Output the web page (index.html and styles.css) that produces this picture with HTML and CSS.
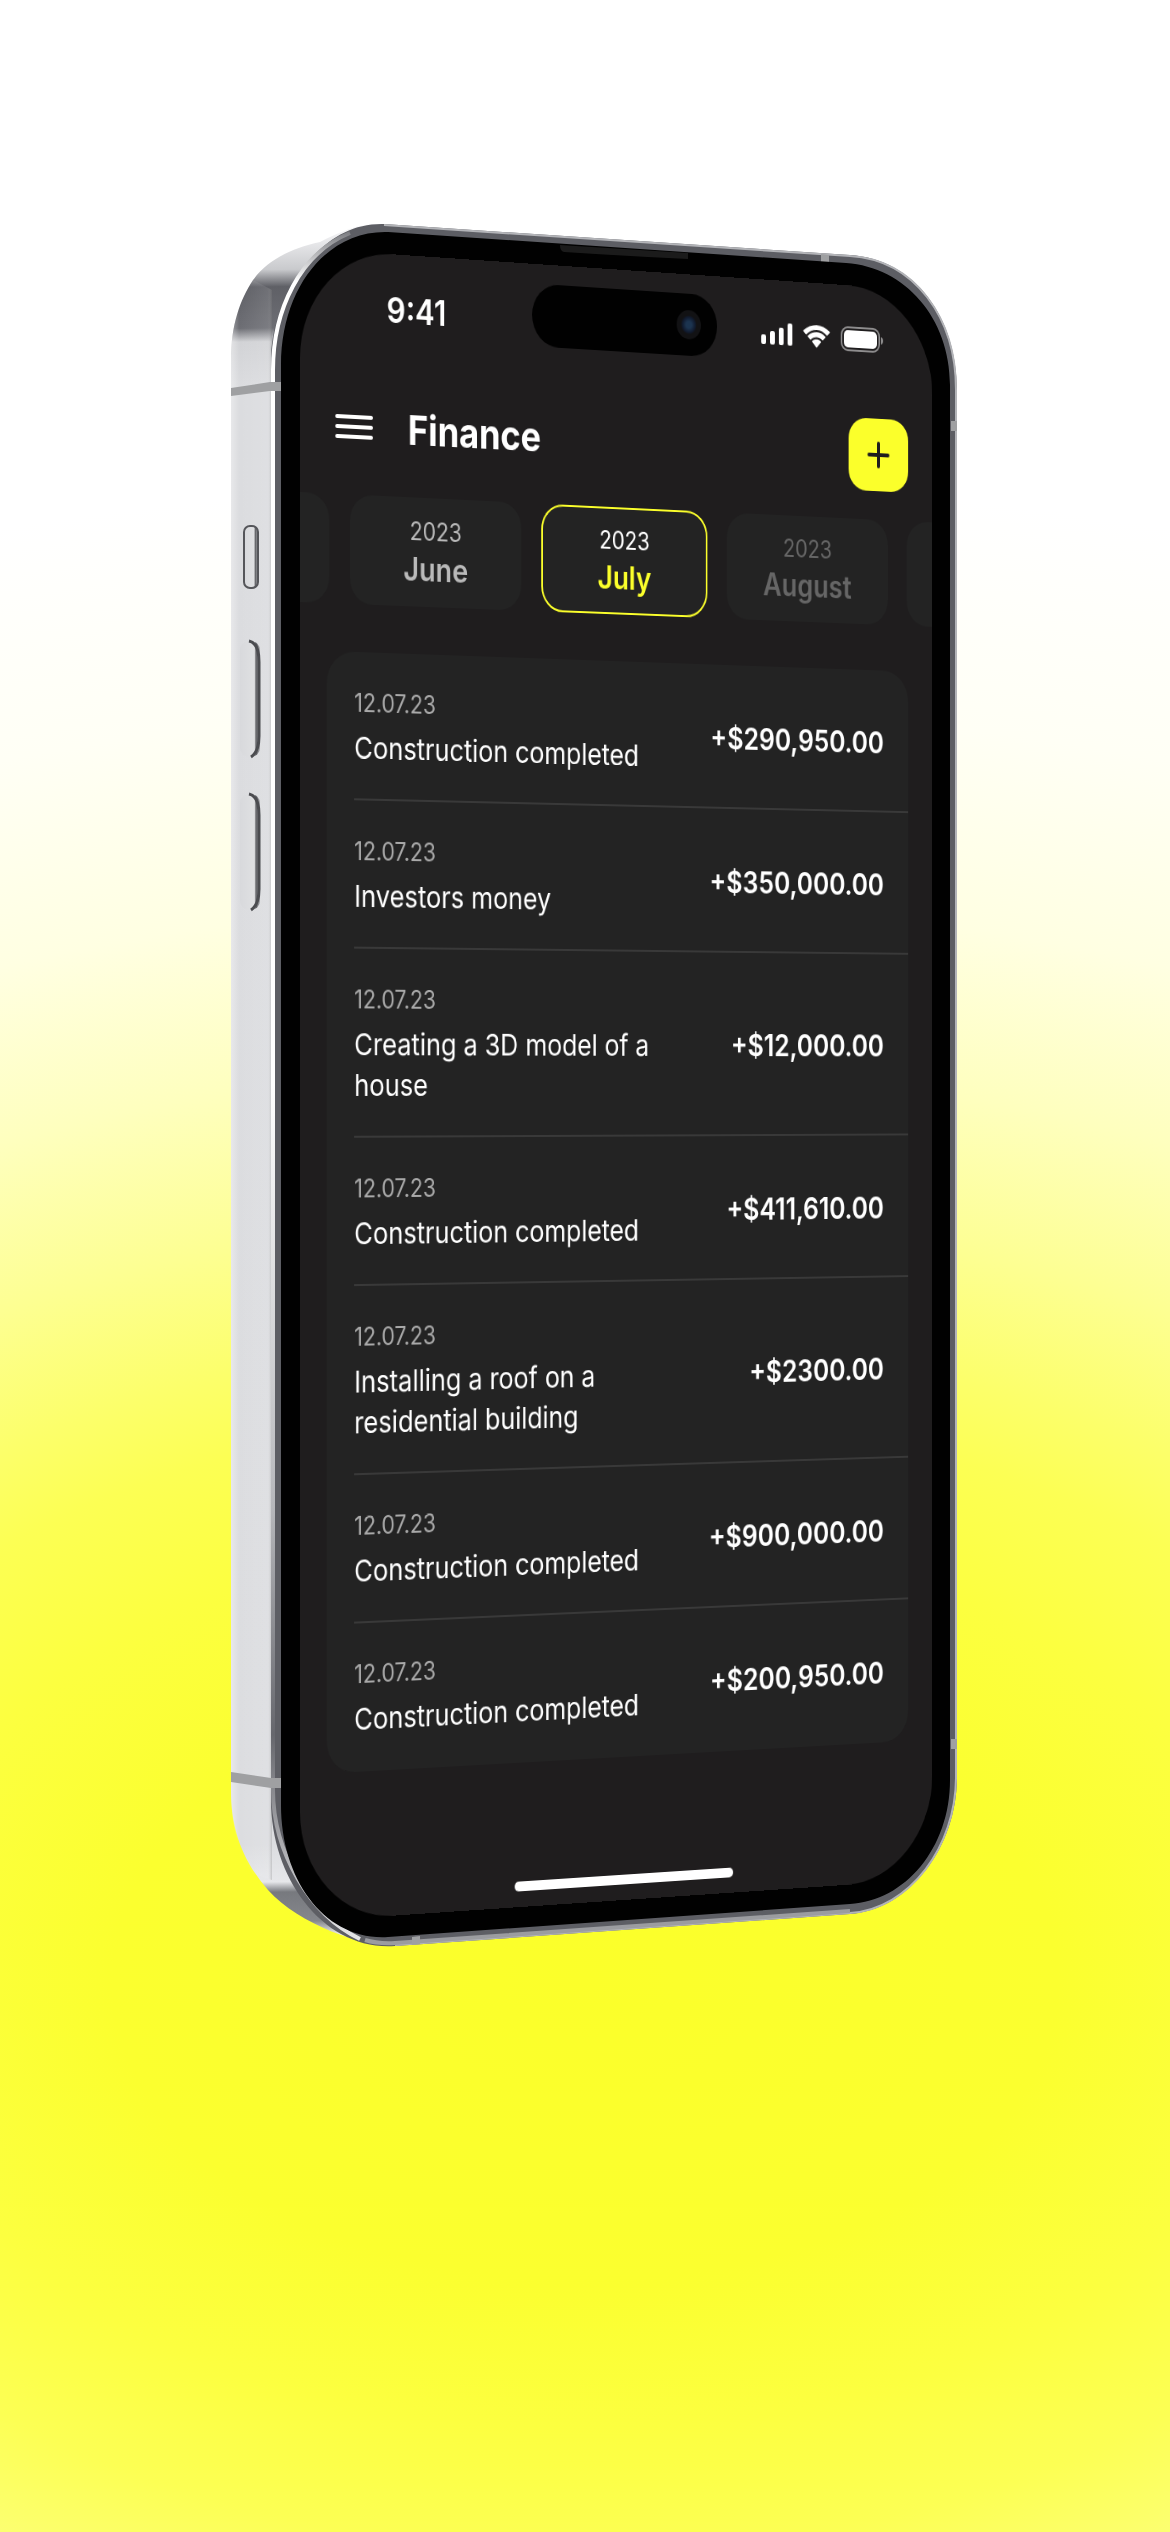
FILE: index.html
```html
<!DOCTYPE html>
<html lang="en">
<head>
<meta charset="utf-8">
<meta name="viewport" content="width=device-width, initial-scale=1">
<title>Finance</title>
<link rel="stylesheet" href="styles.css">
</head>
<body>
<main class="stage">
  <div class="phone">
    <svg class="phone-body" viewBox="213 222 744 1728" preserveAspectRatio="none" aria-hidden="true">
      <defs>
        <linearGradient id="flank" gradientUnits="userSpaceOnUse" x1="0" y1="235" x2="20" y2="1950">
          <stop offset="0" stop-color="#f4f4f6"/>
          <stop offset=".022" stop-color="#c9cacd"/>
          <stop offset=".032" stop-color="#5f6066"/>
          <stop offset=".056" stop-color="#6d6e74"/>
          <stop offset=".064" stop-color="#d2d3d6"/>
          <stop offset=".09" stop-color="#dbdcdf"/>
          <stop offset=".94" stop-color="#dcdde0"/>
          <stop offset=".962" stop-color="#e6e7ea"/>
          <stop offset=".968" stop-color="#77797e"/>
          <stop offset=".985" stop-color="#85878c"/>
          <stop offset=".994" stop-color="#f8f8f8"/>
        </linearGradient>
        <linearGradient id="shade" x1="0" x2="1" y1="0" y2="0">
          <stop offset="0" stop-color="#fff" stop-opacity=".35"/>
          <stop offset=".2" stop-color="#fff" stop-opacity="0"/>
          <stop offset=".9" stop-color="#fff" stop-opacity=".1"/>
          <stop offset="1" stop-color="#777" stop-opacity=".3"/>
        </linearGradient>
        <linearGradient id="shine" gradientUnits="userSpaceOnUse" x1="0" y1="230" x2="0" y2="1940">
          <stop offset="0" stop-color="#77787d"/>
          <stop offset=".03" stop-color="#fff"/>
          <stop offset=".5" stop-color="#fff"/>
          <stop offset=".75" stop-color="#b5b6ba"/>
          <stop offset=".88" stop-color="#66676d"/>
          <stop offset="1" stop-color="#e6e6e8"/>
        </linearGradient>
        <linearGradient id="key" x1="0" x2="1" y1="0" y2="0">
          <stop offset="0" stop-color="#d8d9dc"/>
          <stop offset=".72" stop-color="#dfe0e2"/>
          <stop offset=".8" stop-color="#606165"/>
          <stop offset="1" stop-color="#a5a6aa"/>
        </linearGradient>
      </defs>
      <path id="side" fill="url(#flank)" d="M231 360C231 325 240 300 253 280C266 262 288 249 320 242C340 232 356 224 380 224L420 300V1880L400 1946C360 1946 300 1925 268 1890C240 1858 231 1825 231 1790Z"/>
      <path fill="url(#shade)" d="M231 360C231 325 240 300 253 280L272 290V1880L253 1874C238 1850 231 1825 231 1790Z"/>
      <path fill="#9fa0a2" d="M231 388L270 382H281V391H270L231 396ZM231 1772L271 1778H281V1788H271L231 1782Z"/>
      <path fill="#5d5e64" d="M271 360C271 330 280 306 297 277C320 243 348 223 384 224L850 255C915 259 957 318 957 390V1777C957 1846 910 1910 850 1914L395 1946C325 1951 271 1880 271 1800Z"/>
      <path fill="none" stroke="#b3b4b8" stroke-width="2" d="M384 225L850 256C915 260 956 318 956 390V1777C956 1846 910 1909 850 1913L395 1945"/>
      <path fill="none" stroke="#9b9ca0" stroke-width="4" d="M850 1911L395 1943Q378 1944 365 1940"/>
      <path fill="none" stroke="url(#shine)" stroke-width="4" d="M350 233C300 253 273 310 273 370V1790C273 1852 310 1915 360 1939"/>
      <path fill="#9fa0a2" d="M270 382H281V391H270ZM271 1778H281V1788H271ZM821 254L829 255V262L821 262ZM951 421H957V431H951ZM951 1739H957V1749H951ZM412 1937L420 1936V1944L412 1945Z"/>
      <path fill="#010101" d="M281 365C281 288 327 230 388 232L846 263C905 267 950 318 950 385V1780C950 1848 905 1901 850 1904L388 1937C325 1941 281 1880 281 1805Z"/>
      <path fill="#1b1b1b" d="M560 245L688 253V259Q624 256 564 252Q560 251 560 245Z"/>
      <g>
        <rect x="244" y="526" width="14" height="62" rx="6" fill="url(#key)" stroke="#55565a" stroke-width="2"/>
        <rect x="240" y="641" width="20" height="116" rx="9" fill="url(#key)"/>
        <path fill="none" stroke="#4b4c50" stroke-width="3" d="M249 641Q259 643 259 662V736Q259 752 251 757"/>
        <rect x="240" y="794" width="20" height="116" rx="9" fill="url(#key)"/>
        <path fill="none" stroke="#4b4c50" stroke-width="3" d="M249 794Q259 796 259 815V889Q259 905 251 910"/>
      </g>
    </svg>

    <section class="screen" aria-label="Finance app">
      <div class="island"><span class="camera"></span></div>

      <div class="status">
        <time class="clock">9:41</time>
        <svg class="signal" viewBox="0 0 39 24" aria-hidden="true">
          <rect x="0" y="13" width="6" height="10" rx="2"/>
          <rect x="11" y="9" width="6" height="14" rx="2"/>
          <rect x="22" y="5" width="6" height="18" rx="2"/>
          <rect x="33" y="0" width="6" height="23" rx="2"/>
        </svg>
        <svg class="wifi" viewBox="0 0 35 24" aria-hidden="true">
          <path d="M17.500 5C22.400 5 26.900 6.900 30.200 10.100Q30.700 10.500 31.200 10.100L34 7.200Q34.500 6.600 34 6.100C24.800-2 10.200-2 1 6.100Q.5 6.600 1 7.200L3.800 10.100Q4.300 10.500 4.800 10.100C8.100 6.900 12.600 5 17.500 5Z"/>
          <path d="M17.500 12.500C20.200 12.500 22.700 13.500 24.600 15.300Q25.200 15.800 25.700 15.300L28.500 12.500Q29.100 11.900 28.500 11.400C22.300 5.900 12.700 5.900 6.500 11.400Q5.900 11.900 6.500 12.500L9.300 15.300Q9.800 15.800 10.400 15.300C12.300 13.500 14.800 12.500 17.500 12.500Z"/>
          <path d="M22.900 17.800Q23.500 17.200 22.900 16.700C19.800 14.100 15.200 14.100 12.100 16.700Q11.500 17.200 12.100 17.800L16.900 23Q17.500 23.600 18.100 23Z"/>
        </svg>
        <svg class="battery" viewBox="0 0 54 26" aria-hidden="true">
          <rect x="1" y="1" width="48" height="24" rx="8" fill="none" stroke="#8e8d8e" stroke-width="2"/>
          <rect x="4" y="4" width="42" height="18" rx="5"/>
          <path fill="#8e8d8e" d="M51 9Q54 10 54 13T51 17Z"/>
        </svg>
      </div>

      <header class="top">
        <button class="menu" type="button" aria-label="Menu">
          <svg viewBox="0 0 44 24" aria-hidden="true"><path d="M2 2H42M2 12H42M2 22H42"/></svg>
        </button>
        <h1>Finance</h1>
        <button class="add" type="button" aria-label="Add">
          <svg viewBox="0 0 28 28" aria-hidden="true"><path d="M14 2V26M2 14H26"/></svg>
        </button>
      </header>

      <nav class="months" aria-label="Months">
        <button class="month" type="button" aria-label="Earlier"></button>
        <button class="month past" type="button"><span>2023</span><strong>June</strong></button>
        <button class="month current" type="button" aria-current="true"><span>2023</span><strong>July</strong></button>
        <button class="month" type="button"><span>2023</span><strong>August</strong></button>
        <button class="month" type="button" aria-label="Later"></button>
      </nav>

      <ul class="entries">
        <li><div class="what"><time>12.07.23</time><p>Construction completed</p></div><b>+$290,950.00</b></li>
        <li><div class="what"><time>12.07.23</time><p>Investors money</p></div><b>+$350,000.00</b></li>
        <li><div class="what"><time>12.07.23</time><p>Creating a 3D model of a house</p></div><b>+$12,000.00</b></li>
        <li><div class="what"><time>12.07.23</time><p>Construction completed</p></div><b>+$411,610.00</b></li>
        <li><div class="what"><time>12.07.23</time><p>Installing a roof on a residential building</p></div><b>+$2300.00</b></li>
        <li><div class="what"><time>12.07.23</time><p>Construction completed</p></div><b>+$900,000.00</b></li>
        <li><div class="what"><time>12.07.23</time><p>Construction completed</p></div><b>+$200,950.00</b></li>
      </ul>

      <div class="home"></div>
    </section>
  </div>
</main>
</body>
</html>
```
FILE: styles.css
```css
* {
  box-sizing: border-box;
}

body {
  margin: 0;
  font-family: Inter, "Liberation Sans", sans-serif;
  color: #fff;
}

h1, p, ul {
  margin: 0;
  padding: 0;
}

button {
  border: 0;
  padding: 0;
  font: inherit;
  color: inherit;
  background: none;
}

.stage {
  min-height: 100vh;
  padding-top: 222px;
  overflow: hidden;
  background: radial-gradient(ellipse 202% 59.2% at 50% 78.2%,
    #fbff2a 0%, #fbff2f 20%, #fcff40 30%, #fcff54 38%, #fcff6a 43%,
    #fdff92 51%, #feffbe 61%, #ffffe2 72%, #fffff5 85%, #fff 100%);
}

/* The phone, turned away from the viewer on its right side */
.phone {
  position: relative;
  max-width: 744px;
  margin: 0 auto;
  padding: 26px 0 28px 87px;
}

.phone-body {
  position: absolute;
  inset: 0;
  width: 100%;
  height: 100%;
}

.screen {
  position: relative;
  width: 772px;
  overflow: hidden;
  border-radius: 110px;
  background: #1f1d1e;
  transform: perspective(7200px) rotateY(30.3deg);
  transform-origin: left center;
}

.island {
  position: absolute;
  top: 20px;
  left: 50%;
  display: flex;
  align-items: center;
  justify-content: flex-end;
  width: 226px;
  height: 64px;
  margin-left: -112px;
  padding-right: 20px;
  border-radius: 32px;
  background: #010101;
}

.camera {
  width: 30px;
  height: 30px;
  border-radius: 50%;
  background: radial-gradient(circle, #1c3450 0 16%, #10192c 38%, #121214 46% 100%);
}

.status {
  display: flex;
  align-items: center;
  gap: 13px;
  height: 112px;
  padding: 0 63px 0 101px;
  fill: #fff;
}

.clock {
  flex: 1;
  font-size: 35px;
  font-weight: 600;
}

.signal {
  width: 39px;
  height: 24px;
}

.wifi {
  width: 35px;
  height: 24px;
}

.battery {
  width: 54px;
  height: 26px;
}

.top {
  display: flex;
  align-items: center;
  padding: 26px 31px 30px 41px;
}

.top h1 {
  flex: 1;
  padding-left: 41px;
  font-size: 41px;
  line-height: 48px;
  font-weight: 700;
}

.menu,
.menu svg {
  display: block;
  width: 44px;
  height: 24px;
}

.menu path,
.add path {
  fill: none;
  stroke: #fff;
  stroke-width: 4;
  stroke-linecap: round;
}

.add {
  display: grid;
  place-items: center;
  width: 76px;
  height: 76px;
  border-radius: 22px;
  background: #fbff2b;
}

.add svg {
  width: 28px;
  height: 28px;
}

.add path {
  stroke: #1f1d1e;
}

.months {
  display: flex;
  justify-content: center;
  gap: 24px;
}

.month {
  display: flex;
  flex: none;
  flex-direction: column;
  align-items: center;
  width: 203px;
  min-height: 110px;
  padding: 15px;
  border: 2px solid transparent;
  border-radius: 26px;
  background: #232323;
  color: #666;
}

.month span {
  font-size: 25px;
  line-height: 35px;
}

.month strong {
  font-size: 32px;
  line-height: 41px;
  font-weight: 600;
}

.past {
  color: #b9b9b9;
}

.current {
  border-color: #fbff2b;
  color: #fff;
}

.current strong {
  color: #fbff2b;
}

.entries {
  margin: 48px 31px 0;
  padding-left: 32px;
  border-radius: 32px;
  background: #232323;
  list-style: none;
}

.entries li {
  display: flex;
  align-items: center;
  justify-content: space-between;
  padding: 33px 31px 30px 0;
  border-bottom: 2px solid #393939;
}

.entries li:last-child {
  border-bottom-color: transparent;
}

.what {
  flex: 0 0 380px;
}

.what time {
  display: block;
  margin-bottom: 7px;
  font-size: 25px;
  line-height: 36px;
  color: #a9a9a9;
}

.what p {
  font-size: 30px;
  line-height: 41px;
}

.entries b {
  font-size: 31px;
  font-weight: 600;
}

.home {
  width: 267px;
  height: 10px;
  margin: 121px auto 16px;
  border-radius: 5px;
  background: #fff;
}
```
